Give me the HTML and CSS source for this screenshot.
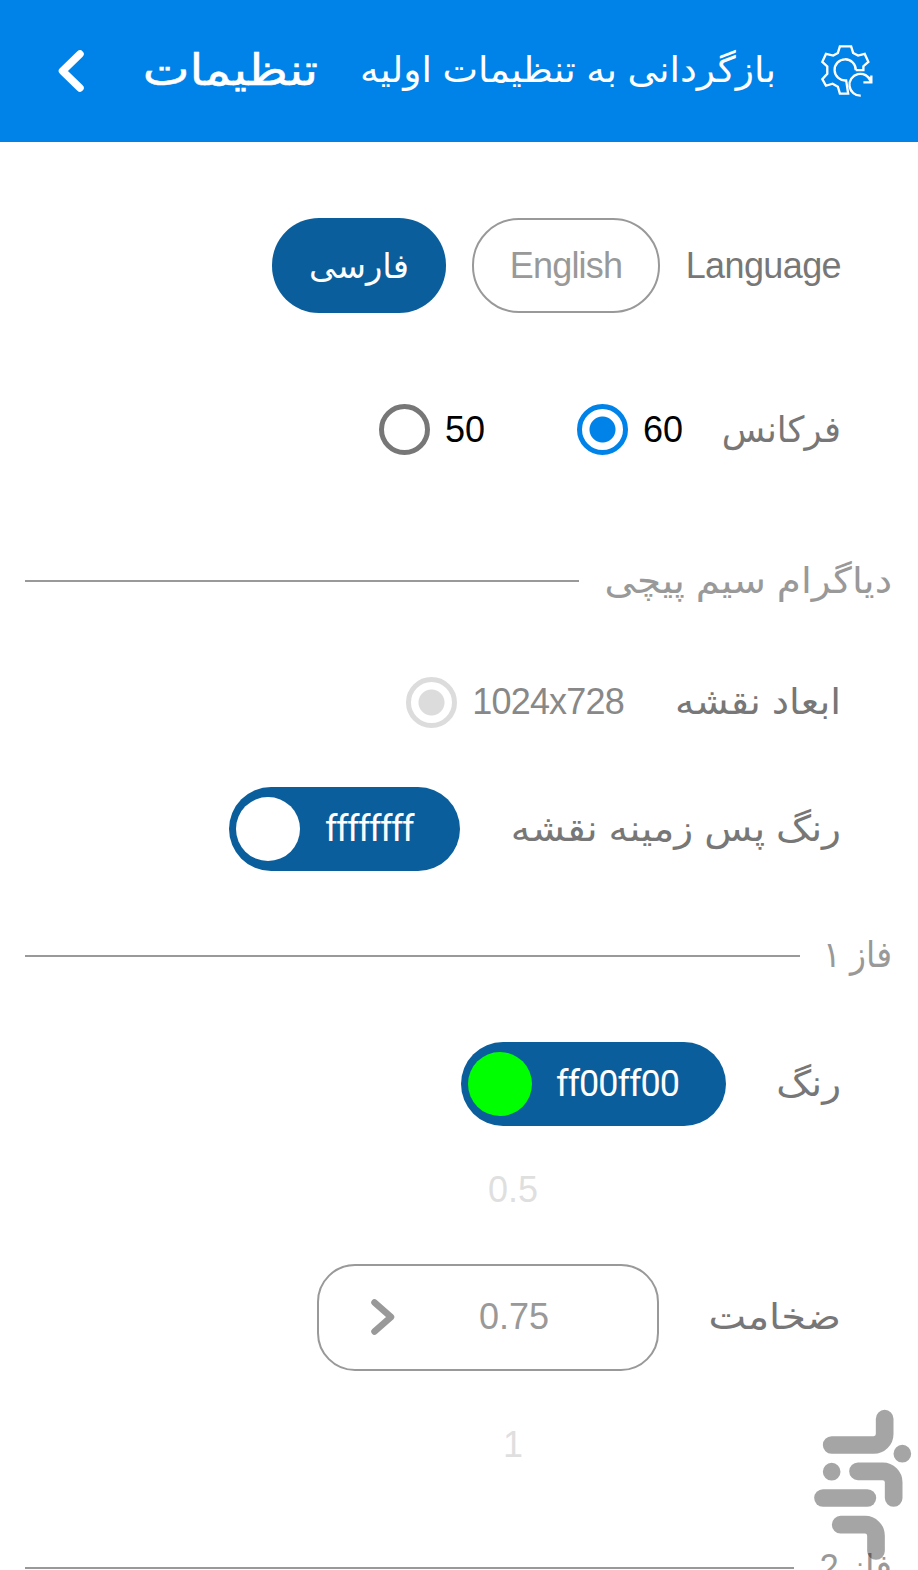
FILE: index.html
```
<!DOCTYPE html>
<html lang="fa" dir="rtl">
<head>
  <meta charset="UTF-8" />
  <meta name="viewport" content="width=device-width, initial-scale=1.0"/>
  <title>تنظیمات</title>
  <link rel="stylesheet" href="styles.css">
</head>
<body>
  <header class="topbar">
    <button class="reset-btn">
      <svg class="gear" viewBox="1085 130 160 160">
        <path d="M1193 209H1216V197L1231 184L1220 160L1200 165L1185 157L1179 137H1145L1139 157L1125 165L1103 160L1092 184L1107 198V220L1092 236L1103 256L1123 250L1139 259L1145 280H1170L1164 240A32 32 0 1 1 1193 209"/>
        <path d="M1208 286A33 33 0 1 1 1238 242M1240 225V246H1216"/>
      </svg>
      <span class="reset-text">بازگردانی به تنظیمات اولیه</span>
    </button>
    <h1 class="title">تنظیمات</h1>
    <svg class="back" viewBox="0 0 26 42"><path d="M22 4L4.500 21L22 38"/></svg>
  </header>

  <main class="settings">
    <div class="row language">
      <span class="label">Language</span>
      <button class="lang-btn english">English</button>
      <button class="lang-btn farsi active">فارسی</button>
    </div>

    <div class="row frequency">
      <span class="label">فرکانس</span>
      <label class="option"><span>60</span><i class="radio checked"></i></label>
      <label class="option"><span>50</span><i class="radio"></i></label>
    </div>

    <div class="section diagram"><h2>دیاگرام سیم پیچی</h2></div>

    <div class="row size">
      <span class="label">ابعاد نقشه</span>
      <label class="option disabled"><span>1024x728</span><i class="radio checked"></i></label>
    </div>

    <div class="row background">
      <span class="label">رنگ پس زمینه نقشه</span>
      <button class="color-btn"><span>ffffffff</span><i class="swatch white"></i></button>
    </div>

    <div class="section phase-one"><h2>فاز ۱</h2></div>

    <div class="row color">
      <span class="label">رنگ</span>
      <button class="color-btn"><span>ff00ff00</span><i class="swatch green"></i></button>
    </div>

    <div class="row thickness">
      <span class="label">ضخامت</span>
      <div class="picker">
        <span class="near">0.5</span>
        <div class="current">
          <span>0.75</span>
          <svg class="next" viewBox="0 0 24 36"><path d="M3.500 3.500L20 18L3.500 32.500"/></svg>
        </div>
        <span class="near">1</span>
      </div>
    </div>

    <div class="section phase-two"><h2>فاز 2</h2></div>
  </main>

  <svg class="watermark" viewBox="0 0 444 540">
    <path d="M344 86V132A33 33 0 0 1 311 165H185"/>
    <path d="M264 244H338A33 33 0 0 1 371 277V324"/>
    <path d="M159 324H292"/>
    <path d="M212 404H285A33 33 0 0 1 318 437V483"/>
    <path d="M397 191h.01M185 245h.01"/>
  </svg>
</body>
</html>
```
FILE: styles.css
```
* {
  box-sizing: border-box;
}

body {
  margin: 0;
  height: 1570px;
  overflow: hidden;
  position: relative;
  background: #fff;
  color: #777;
  font-family: 'Liberation Sans', 'DejaVu Sans', sans-serif;
  font-size: 36px;
}

button {
  font: inherit;
  border: none;
  padding: 0;
  background: none;
  color: inherit;
}

.topbar {
  height: 142px;
  background: #0083e9;
  color: #fff;
  display: flex;
  align-items: center;
  padding: 0 45px 0 58px;
}

.reset-btn {
  display: flex;
  align-items: center;
  gap: 44px;
}

.gear {
  width: 53px;
  height: 53px;
  margin-top: -2px;
  fill: none;
  stroke: #fff;
  stroke-width: 7;
}

/* Persian text is stretched a little from its right edge */
.reset-text,
.title,
.label,
.section h2 {
  white-space: nowrap;
  transform-origin: right center;
}

.reset-text {
  width: 415px;
  padding-bottom: 3px;
  text-align: right;
  transform: scaleX(1.05);
}

.title {
  width: 174px;
  font-size: 44px;
  font-weight: normal;
  margin: 0 43px 0 auto;
  padding-bottom: 4px;
  transform: scaleX(1.13);
  -webkit-text-stroke: 0.500px #fff;
}

.back {
  width: 26px;
  height: 42px;
  fill: none;
  stroke: #fff;
  stroke-width: 7.500;
  stroke-linecap: round;
  stroke-linejoin: round;
}

.row {
  display: flex;
  align-items: center;
  padding-right: 77px;
}

.language {
  margin-top: 76px;
  height: 95px;
  gap: 26px;
}

.language .label {
  width: 155px;
  letter-spacing: -0.600px;
}

.lang-btn {
  height: 95px;
  border-radius: 47px;
}

.english {
  width: 188px;
  border: 2px solid #999;
  color: #999;
  letter-spacing: -0.800px;
}

.farsi {
  width: 174px;
  background: #0b5e9c;
  color: #fff;
  font-size: 34px;
}

.frequency {
  margin-top: 91px;
  height: 51px;
}

.frequency .label {
  width: 119px;
  margin-left: 39px;
  transform: scaleX(0.985);
}

.option {
  display: flex;
  align-items: center;
  gap: 15px;
  color: #000;
}

.option + .option {
  margin-right: 92px;
}

.radio {
  width: 51px;
  height: 51px;
  border: 5px solid #777;
  border-radius: 50%;
}

.radio.checked {
  border-color: #0083e9;
  background: radial-gradient(circle, #0083e9 12.500px, transparent 13.500px);
}

.disabled {
  color: #888;
  letter-spacing: -0.800px;
}

.disabled .radio.checked {
  border-color: #dcdcdc;
  background: radial-gradient(circle, #dcdcdc 12.500px, transparent 13.500px);
}

.section {
  height: 60px;
  display: flex;
  align-items: center;
  gap: 26px;
  padding: 0 26px 0 25px;
  color: #999;
}

.section h2 {
  font: inherit;
  margin: 0;
}

.section::after {
  content: "";
  flex: 1;
  height: 2px;
  background: #999;
}

.diagram {
  margin-top: 96px;
}

.diagram h2 {
  width: 287px;
  transform: scaleX(1.083);
}

.size {
  margin-top: 65px;
  height: 52px;
  gap: 52px;
}

.size .label {
  width: 165px;
  transform: scaleX(1.077);
}

.background {
  margin-top: 59px;
  gap: 52px;
}

.background .label {
  width: 329px;
  transform: scaleX(1.090);
}

.color-btn {
  height: 84px;
  padding: 0 47px 0 7px;
  border-radius: 42px;
  background: #0b5e9c;
  color: #fff;
  display: flex;
  align-items: center;
  justify-content: space-between;
  font-family: Roboto, sans-serif;
  letter-spacing: -1px;
}

.background .color-btn {
  width: 231px;
  letter-spacing: -1.500px;
}

.color .color-btn {
  width: 265px;
}

.swatch {
  width: 64px;
  height: 64px;
  flex-shrink: 0;
  border-radius: 50%;
}

.white {
  background: #fff;
}

.green {
  background: #0f0;
}

.phase-one {
  margin-top: 54px;
}

.phase-one::after {
  margin-top: 1px;
}

.phase-one h2 {
  width: 66px;
  transform: scaleX(0.920);
}

.color {
  margin-top: 57px;
  gap: 52px;
}

.color .label {
  width: 63px;
  transform: scaleX(1.085);
}

.thickness {
  margin-top: 32px;
  height: 318px;
  gap: 50px;
}

.thickness .label {
  width: 132px;
  transform: scaleX(1.110);
}

.picker {
  width: 342px;
  display: flex;
  flex-direction: column;
  gap: 49px;
}

.near {
  height: 50px;
  line-height: 50px;
  padding-left: 50px;
  text-align: center;
  color: #dfdfdf;
}

.current {
  height: 107px;
  border: 2px solid #999;
  border-radius: 38px;
  display: flex;
  align-items: center;
  justify-content: space-between;
  padding: 0 108px 0 52px;
  color: #999;
}

.next {
  width: 24px;
  height: 36px;
  fill: none;
  stroke: #999;
  stroke-width: 6.500;
  stroke-linecap: round;
  stroke-linejoin: round;
}

.phase-two {
  margin-top: 62px;
}

.phase-two h2 {
  width: 72px;
  transform: scaleX(0.960);
}

.watermark {
  position: absolute;
  left: 770px;
  top: 1390px;
  width: 148px;
  height: 180px;
  fill: none;
  stroke: #000;
  stroke-width: 53;
  stroke-linecap: round;
  opacity: 0.350;
}
```
